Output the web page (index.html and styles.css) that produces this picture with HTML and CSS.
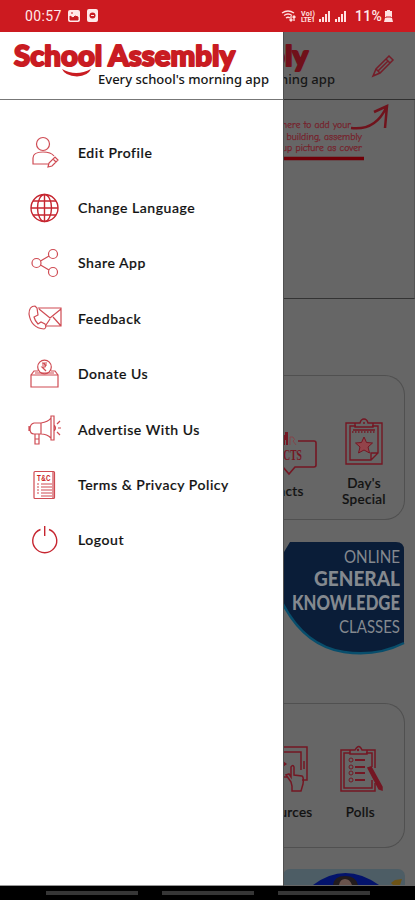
FILE: index.html
```html
<!DOCTYPE html>
<html lang="en">
<head>
<meta charset="utf-8">
<title>School Assembly</title>
<link rel="stylesheet" href="styles.css">
</head>
<body>
<header class="status">
  <span class="clock">00:57</span>
  <svg class="notices" width="32" height="14" viewBox="0 0 32 14">
    <rect x="0" y="1" width="12" height="12" rx="2" fill="#ffe9e9"/>
    <path d="M2 11V7l3 2 2-2 3 1v3zM3 4h2" fill="#c91c22" stroke="#c91c22"/>
    <rect x="19" y="0" width="11" height="13" rx="2" fill="#ffe9e9"/>
    <circle cx="24.500" cy="6.500" r="3" fill="#c91c22"/><path d="M23 6.500h3" stroke="#ffe9e9"/>
  </svg>
  <svg class="signals" width="70" height="14" viewBox="0 0 70 14">
    <g fill="none" stroke="#ffe1e1" stroke-width="1.300"><path d="M1 4q6-4 12 0M3 6.500q4-3 8 0M5 9q2-1.500 4 0"/><path d="M10 7v5m-1.500-1.500L10 12l1.500-1.500M13 12V7m-1.500 1.500L13 7l1.500 1.500"/></g>
    <g class="volte"><text x="20" y="6.500" textLength="14">VoI)</text><text x="20" y="13" textLength="14">LTE1</text></g>
    <g fill="#ffe1e1"><path d="M38 10h2v3h-2zM41 8h2v5h-2zM44 5h2v8h-2zM47 2h2v11h-2z"/><path d="M54 10h2v3h-2zM57 8h2v5h-2zM60 5h2v8h-2zM63 2h2v11h-2z"/></g>
  </svg>
  <span class="charge">11%</span>
  <svg class="battery" width="9" height="14" viewBox="0 0 9 14"><path d="M3 1h3v1h2v6l-2 1h2l1 4H0l1-4h2L1 8V2h2z" fill="#ffe1e1"/><path d="M2 8h5" stroke="#c91c22"/></svg>
</header>

<main class="screen">
  <nav class="drawer">
    <div class="brand">
      <svg width="283" height="67" viewBox="0 0 283 67">
        <text class="logo" x="14" y="33.500" textLength="221" lengthAdjust="spacingAndGlyphs">School Assembly</text>
        <path d="M62 37q14 8 29 0-3 7-14 7.500Q65 44 62 37z" fill="#c91c22"/>
        <text class="tagline" x="98" y="52" textLength="171" lengthAdjust="spacingAndGlyphs">Every school's morning app</text>
      </svg>
    </div>
    <ul class="menu">
      <li><svg class="icon" viewBox="0 0 36 36"><circle cx="17" cy="10" r="6.500"/><path d="M23 30H7v-6q0-6 10-6 8 0 11 4M22 33l1-4 6-6 3 3-6 6zM27 25l3 3"/></svg><span>Edit Profile</span></li>
      <li><svg class="icon globe" viewBox="0 0 36 36"><circle cx="18.500" cy="18" r="13.500"/><ellipse cx="18.500" cy="18" rx="7" ry="13.500"/><path d="M18.500 4.500v27M5 18h27M7 11h23M7 25h23"/></svg><span>Change Language</span></li>
      <li><svg class="icon" viewBox="0 0 36 36"><circle cx="10.500" cy="18" r="4.500"/><circle cx="27" cy="9" r="4.500"/><circle cx="27" cy="27" r="4.500"/><path d="M14.500 16l8.500-5M14.500 20l8.500 5"/></svg><span>Share App</span></li>
      <li><svg class="icon" viewBox="0 0 36 36"><path d="M12 8h23v18H20M13 9l11 9 11-9M35 26l-8-9M20 25l4-6"/><path d="M9 6q-6 0-6 8 2 14 15 15 3-1 1-5l-4-2-3 2q-3-3-4-7l4-2-1-7z"/></svg><span>Feedback</span></li>
      <li><svg class="icon" viewBox="0 0 36 36"><path d="M5 19h27v12H5zM5 19l3-4h4M25 15h4l3 4M9 17h19"/><circle cx="18.500" cy="11" r="6.800"/><path d="M16 7h5M16 9h5M16 7q5 1 3 4h-3l4 4"/></svg><span>Donate Us</span></li>
      <li><svg class="icon" viewBox="0 0 36 36"><path d="M15 12H8q-4 1-4 6t4 5h7zM15 12q7-1 10-5v20q-4-4-10-4M25 5h3v24h-3zM9 23v10h4V23M9 28h4M28 14q3 3 0 6M31 13l3-3M32 17h3M31 21l3 3M3 15v5"/></svg><span>Advertise With Us</span></li>
      <li><svg class="icon" viewBox="0 0 36 36"><rect x="8" y="4.500" width="20.500" height="27" rx="1"/><path d="M27 5v26"/><text class="tc" x="11" y="14" textLength="14" lengthAdjust="spacingAndGlyphs">T&amp;C</text><path d="M15 17h11M15 20h11M15 23h11M15 26h11M15 29h11M11 17h2M11 20h2M11 23h2M11 26h2"/></svg><span>Terms &amp; Privacy Policy</span></li>
      <li><svg class="icon power" viewBox="0 0 36 36"><path d="M14.500 7.500a12 12 0 1 0 8.500 0M18.700 4v10"/></svg><span>Logout</span></li>
    </ul>
  </nav>

  <section class="page">
    <div class="page-head">
      <svg width="132" height="67" viewBox="0 0 132 67">
        <text class="logo dim" x="-196" y="33.500" textLength="221" lengthAdjust="spacingAndGlyphs">School Assembly</text>
        <text class="tagline" x="-119" y="52" textLength="171" lengthAdjust="spacingAndGlyphs">Every school's morning app</text>
        <path d="M90 44l3-7 13-13 4 4-13 13zM93 37l4 4M103 27l4 4M95 39l10-10" fill="none" stroke="#741d28" stroke-width="1.500"/>
      </svg>
    </div>
    <div class="cover">
      <svg width="131" height="70" viewBox="0 0 131 70">
        <g class="hint"><text x="-1" y="28" textLength="69" lengthAdjust="spacingAndGlyphs">here to add your</text><text x="-2" y="40" textLength="81" lengthAdjust="spacingAndGlyphs">l building, assembly</text><text x="-1" y="51" textLength="80" lengthAdjust="spacingAndGlyphs">up picture as cover</text></g>
        <path d="M0 58.500h81" stroke="#700008" stroke-width="3.500"/>
        <path d="M68 28q24 3 35-20M91 12l13-6-2 22" fill="none" stroke="#70131c" stroke-width="2.500"/>
      </svg>
    </div>
    <div class="card first">
      <figure class="tile facts">
        <svg width="36" height="54" viewBox="0 0 36 54"><path d="M15 17h16q2 0 2 2v22q0 2-2 2H12l-6 7-6-7" fill="none" stroke="#741723" stroke-width="1.600"/><path d="M0 11h2V8h3v4v9H3v-5H2v5H0z" fill="#741723"/><path d="M7 21v-8h3q3 3 0 4l3 4" fill="none" stroke="#83444a"/><text class="fact-word" x="-12" y="36" textLength="31" lengthAdjust="spacingAndGlyphs">FACTS</text></svg>
        <figcaption>Facts</figcaption>
      </figure>
      <figure class="tile special">
        <svg width="40" height="48" viewBox="0 0 40 48"><g fill="none" stroke="#741723" stroke-width="1.400"><path d="M12 5H2v41h36V5H28M12 8H6v34h21l7-7V8h-6M27 42v-7h7M11 9V5h5q1-4 4-4t4 4h5v4zM9 12h22"/><path d="M8 14h24" stroke-dasharray="1.500 1.500"/></g><circle cx="20" cy="5" r="1" fill="#741723"/><path d="M20 19l2.500 5.500 6 .5-4.500 4 1.500 6-5.500-3-5.500 3 1.500-6-4.500-4 6-.5z" fill="#93434a" stroke="#741723"/></svg>
        <figcaption>Day's<br>Special</figcaption>
      </figure>
    </div>
    <div class="banner">
      <svg width="122" height="114" viewBox="0 0 122 114">
        <path d="M7 1h106q8 0 8 8v93q-28 14-60 9Q20 103 1 64V11z" fill="#0a1d38"/>
        <path d="M0 63q22 42 61 48 32 5 60-9" fill="none" stroke="#084e6c" stroke-width="2.500"/>
        <g fill="#84898f"><text x="61" y="22" textLength="56" lengthAdjust="spacingAndGlyphs">ONLINE</text><text class="strong" x="31" y="45" textLength="86" lengthAdjust="spacingAndGlyphs">GENERAL</text><text class="strong" x="9" y="69" textLength="108" lengthAdjust="spacingAndGlyphs">KNOWLEDGE</text><text x="56" y="92" textLength="61" lengthAdjust="spacingAndGlyphs">CLASSES</text></g>
      </svg>
    </div>
    <div class="card second">
      <figure class="tile resources">
        <svg width="26" height="48" viewBox="0 0 26 48"><g fill="none" stroke="#741723" stroke-width="1.500"><path d="M0 2h24v33h-5M0 7h18v18M0 32h4M21 16v8"/><path d="M8 37l-5-7 3-1 2 3V22q2-3 3 0v8l8 1q2 1 1 8l-2 7H9v-5z"/></g><path d="M0 16l4 3-4 3z" fill="#741723"/></svg>
        <figcaption>Resources</figcaption>
      </figure>
      <figure class="tile polls">
        <svg width="44" height="48" viewBox="0 0 44 48"><g fill="none" stroke="#741723" stroke-width="1.500"><path d="M12 5H2v41h34V38M27 5h9v18M11 8H5v35h28v-8M33 22V8h-6M11 9V5h5q4-7 7 0h5v4z"/><path d="M16 15h10M16 22h10M16 28h10M16 35h10" stroke-width="2.200"/><path d="M29 23l3-1 11 20v3l-3-1z" fill="#741723"/></g><g fill="none" stroke="#741723"><circle cx="12" cy="15" r="2"/><circle cx="12" cy="22" r="2"/><circle cx="12" cy="28" r="2"/><circle cx="12" cy="35" r="2"/></g><circle cx="19" cy="5" r="1.200" fill="#741723"/></svg>
        <figcaption>Polls</figcaption>
      </figure>
    </div>
    <div class="promo">
      <svg width="122" height="16" viewBox="0 0 122 16"><rect width="122" height="24" rx="7" fill="#4d5d65"/><path d="M30 16Q62-8 96 16z" fill="#03136b"/><path d="M50 16q1-9 12-9t13 9z" fill="#221b1c"/><path d="M56 16q1-6 6-6t7 6z" fill="#69534c"/><path d="M108 14l4-3 7-1-2 6h-7z" fill="#6c5316"/></svg>
    </div>
  </section>
</main>
<footer class="system"><i></i><i></i><i></i></footer>
</body>
</html>
```

FILE: styles.css
```css
* { box-sizing: border-box; }
body { margin: 0; width: 415px; height: 900px; display: flex; flex-direction: column; overflow: hidden; font-family: Lato, sans-serif; color: #111; background: #666; }
svg { display: block; flex: none; }

.status { height: 32px; flex: none; background: #cc1a20; color: #ffe9e9; display: flex; align-items: center; padding: 0 22px 0 25px; font-family: Roboto, sans-serif; font-size: 14px; }
.clock { width: 43px; letter-spacing: .4px; }
.signals { margin-left: auto; margin-right: 4px; }
.volte { fill: #ffe1e1; font: 700 7px Roboto, sans-serif; }
.charge { width: 29px; font-weight: 500; font-size: 14px; letter-spacing: .3px; }

.screen { height: 854px; flex: none; display: flex; }
.drawer { width: 283px; flex: none; background: #fff; border-bottom: 1px solid #999; }
.brand { height: 68px; border-bottom: 1.500px solid #777; }
.logo { font: 900 29px Lato, sans-serif; fill: #c91c22; stroke: #c91c22; stroke-width: 2px; stroke-linejoin: round; }
.logo.dim { fill: #70101a; stroke: #70101a; }
.tagline { font: 500 12.500px "Noto Sans", sans-serif; fill: #161616; }

.menu { list-style: none; margin: 0; padding: 24.500px 0 0 26px; }
.menu li { height: 55.400px; display: flex; align-items: center; gap: 16px; font-size: 14px; font-weight: 500; letter-spacing: .55px; -webkit-text-stroke: .2px #111; }
.icon { width: 36px; height: 36px; fill: none; stroke: #cf4b53; stroke-width: 1.200; overflow: visible; }
.globe, .power { stroke: #c62630; stroke-width: 1.400; }
.tc { font: 700 9px "Liberation Sans", sans-serif; fill: #c91c22; stroke: none; }

.page { width: 132px; flex: none; overflow: hidden; background: #666; border-left: 1px solid #505050; }
.page svg { margin-left: -1px; }
.page-head { height: 68px; border-bottom: 1.500px solid #303030; }
.cover { height: 199px; border-bottom: 1px solid #333; border-right: 1px solid #555; }
.hint { font: 10.500px "Comic Neue", "Comic Sans MS", Lato, sans-serif; fill: #77202a; stroke: #77202a; stroke-width: .25px; }

.card { width: 121px; height: 145px; border: 1px solid #505050; border-left: 0; border-radius: 0 20px 20px 0; display: flex; font-size: 13.500px; font-weight: 500; line-height: 16px; -webkit-text-stroke: .2px #111; }
.first { margin-top: 76px; }
.second { margin-top: 48px; }
.tile { margin: 0; }
.tile figcaption { text-align: center; letter-spacing: .3px; }
.facts { width: 40px; padding-top: 48px; }
.facts figcaption { margin: 5px 0 0 -14px; width: 35px; }
.fact-word { font: 700 15px "Liberation Serif", serif; fill: #741723; -webkit-text-stroke: 0; }
.special { width: 80px; padding-top: 42px; }
.special svg { margin-left: 20px; }
.special figcaption { margin-top: 9px; }
.banner { height: 114px; margin-top: 21px; font-size: 18px; }
.banner .strong { font-weight: 900; font-size: 20px; }
.resources { width: 33px; padding-top: 41px; }
.resources figcaption { width: 68px; margin: 11px 0 0 -37px; }
.polls { padding-top: 41px; width: 88px; }
.polls svg { margin-left: 22px; }
.polls figcaption { margin-top: 11px; }
.promo { margin-top: 21px; height: 16px; overflow: hidden; }

.system { height: 14px; flex: none; background: #000; display: flex; gap: 24px; padding: 5px 0 0 46px; }
.system i { width: 92px; height: 4px; flex: none; background: #363636; }
```
